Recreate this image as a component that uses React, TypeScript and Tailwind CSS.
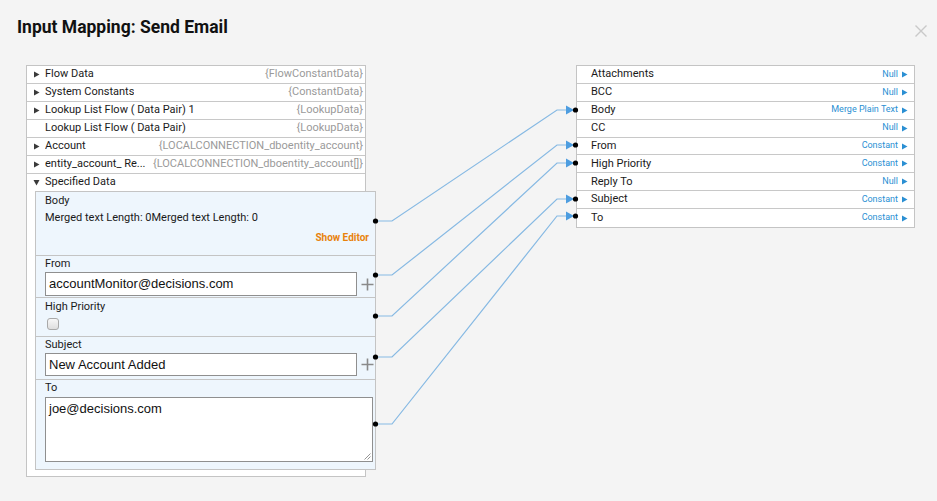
const leftRows = [
  { label: 'Flow Data', value: '{FlowConstantData}', arrow: true },
  { label: 'System Constants', value: '{ConstantData}', arrow: true },
  { label: 'Lookup List Flow ( Data Pair) 1', value: '{LookupData}', arrow: true },
  { label: 'Lookup List Flow ( Data Pair)', value: '{LookupData}', arrow: false },
  { label: 'Account', value: '{LOCALCONNECTION_dboentity_account}', arrow: true },
  { label: 'entity_account_ Re...', value: '{LOCALCONNECTION_dboentity_account[]}', arrow: true },
];

const rightRows = [
  { label: 'Attachments', value: 'Null' },
  { label: 'BCC', value: 'Null' },
  { label: 'Body', value: 'Merge Plain Text' },
  { label: 'CC', value: 'Null' },
  { label: 'From', value: 'Constant' },
  { label: 'High Priority', value: 'Constant' },
  { label: 'Reply To', value: 'Null' },
  { label: 'Subject', value: 'Constant' },
  { label: 'To', value: 'Constant' },
];

// source y (left dots) -> target y (right dots)
const links = [
  [221, 110],
  [275, 145],
  [316, 163],
  [357, 199],
  [424, 216],
];

const PlusIcon = () => (
  <svg width="13" height="13" viewBox="0 0 13 13" className="shrink-0">
    <path d="M6.5 0.5v12M0.5 6.5h12" stroke="#8a8a8a" strokeWidth="1.6" />
  </svg>
);

const Caret = ({ down = false, color = '#3a3a3a' }: { down?: boolean; color?: string }) => (
  <svg width="7" height="7" viewBox="0 0 7 7" className="shrink-0">
    {down ? <polygon points="0.5,1 6.5,1 3.5,6.5" fill={color} /> : <polygon points="1,0.5 6.5,3.5 1,6.5" fill={color} />}
  </svg>
);

const Connectors = () => (
  <svg className="absolute left-0 top-0 pointer-events-none" width="937" height="501">
    {links.map(([sy, ty], i) => (
      <g key={i}>
        <polyline
          points={`375.5,${sy} 392,${sy} 557,${ty} 567,${ty}`}
          fill="none"
          stroke="#86b9e3"
          strokeWidth="1.2"
        />
        <polygon points={`566,${ty - 4.5} 574,${ty} 566,${ty + 4.5}`} fill="#4d9de0" />
        <circle cx="375.5" cy={sy} r="2.6" fill="#000" />
        <circle cx="575.5" cy={ty} r="2.6" fill="#000" />
      </g>
    ))}
  </svg>
);

const App: React.FC = () => {
  return (
    <div
      className="relative w-[937px] h-[501px] bg-[#f4f4f4] overflow-hidden text-[#222]"
      style={{ fontFamily: 'Roboto, "Liberation Sans", sans-serif' }}
    >
      {/* Header */}
      <div className="flex items-center justify-between pl-[17px] pr-[10px] pt-[14px] h-[40px]">
        <h1 className="text-[17.5px] font-bold text-[#111]">Input Mapping: Send Email</h1>
        <svg width="12" height="12" viewBox="0 0 12 12" className="mt-[7px]">
          <path d="M0.5 0.5l11 11M11.5 0.5l-11 11" stroke="#c9c9c9" strokeWidth="1.4" />
        </svg>
      </div>

      <div className="flex items-start justify-between pl-[26px] pr-[22px] pt-[25px]">
        {/* Left: available data */}
        <div className="w-[340px] border border-[#c4c4c4] bg-white pb-[6px]">
          {leftRows.map((row) => (
            <div
              key={row.label}
              className="flex items-center h-[18px] border-b border-[#c8c8c8] pl-[6px] pr-[2px] text-[11px]"
            >
              <span className="w-[12px] flex items-center">{row.arrow ? <Caret /> : null}</span>
              <span className="truncate text-[#1a1a1a]">{row.label}</span>
              <span className="ml-auto pl-[4px] text-[11px] text-[#9a9a9a] whitespace-nowrap">{row.value}</span>
            </div>
          ))}
          <div className="flex items-center h-[17px] pl-[6px] text-[11px]">
            <span className="w-[12px] flex items-center"><Caret down /></span>
            <span className="text-[#1a1a1a]">Specified Data</span>
          </div>

          {/* Specified data panel */}
          <div className="ml-[8px] w-[341px] border border-[#c4c4c4] bg-[#eef6fd] text-[11px] text-[#1a1a1a]">
            <div className="h-[64px] border-b border-[#c4c4c4] pl-[9px] pr-[6px] pt-[2px] flex flex-col">
              <div className="leading-[14px]">Body</div>
              <div className="leading-[14px] mt-[3px]">Merged text Length: 0Merged text Length: 0</div>
              <div className="mt-auto mb-[10px] self-end text-[10px] font-bold text-[#e8820c]">Show Editor</div>
            </div>

            <div className="h-[42px] border-b border-[#c4c4c4] pl-[9px] pt-[1px]">
              <div className="leading-[14px]">From</div>
              <div className="flex items-center gap-[4px] mt-[1px]">
                <div
                  className="w-[312px] h-[24px] border border-[#8f8f8f] bg-white flex items-center px-[3px] text-[13px] text-[#111]"
                  style={{ fontFamily: '"Liberation Sans", Arial, sans-serif' }}
                >
                  accountMonitor@decisions.com
                </div>
                <PlusIcon />
              </div>
            </div>

            <div className="h-[39px] border-b border-[#c4c4c4] pl-[9px] pt-[2px]">
              <div className="leading-[14px]">High Priority</div>
              <div className="mt-[4px] ml-[2px] w-[12px] h-[12px] rounded-[3px] border border-[#a9a9a9] bg-gradient-to-b from-[#f7f7f7] to-[#dedede]"></div>
            </div>

            <div className="h-[43px] border-b border-[#c4c4c4] pl-[9px] pt-[1px]">
              <div className="leading-[14px]">Subject</div>
              <div className="flex items-center gap-[4px] mt-[1px]">
                <div
                  className="w-[312px] h-[23px] border border-[#8f8f8f] bg-white flex items-center px-[3px] text-[13px] text-[#111]"
                  style={{ fontFamily: '"Liberation Sans", Arial, sans-serif' }}
                >
                  New Account Added
                </div>
                <PlusIcon />
              </div>
            </div>

            <div className="h-[89px] pl-[9px] pt-[1px]">
              <div className="leading-[14px]">To</div>
              <div
                className="relative mt-[2px] w-[328px] h-[65px] border border-[#8f8f8f] bg-white px-[3px] pt-[1px] text-[13px] text-[#111]"
                style={{ fontFamily: '"Liberation Sans", Arial, sans-serif' }}
              >
                joe@decisions.com
                <svg width="7" height="7" viewBox="0 0 7 7" className="absolute right-[1px] bottom-[1px]">
                  <path d="M6.5 0.5l-6 6M6.5 3.5l-3 3" stroke="#8a8a8a" strokeWidth="0.9" />
                </svg>
              </div>
            </div>
          </div>
        </div>

        {/* Right: inputs */}
        <div className="w-[339px] border border-[#c4c4c4] bg-white">
          {rightRows.map((row, i) => (
            <div
              key={row.label}
              className={`flex items-center h-[17.9px] pl-[14px] pr-[6px] ${i < rightRows.length - 1 ? 'border-b border-[#c8c8c8]' : ''}`}
            >
              <span className="text-[11px] text-[#1a1a1a]">{row.label}</span>
              <span className="ml-auto flex items-center gap-[3px] text-[9px] text-[#2a8fd3]">
                {row.value}
                <Caret color="#2a8fd3" />
              </span>
            </div>
          ))}
        </div>
      </div>

      <Connectors />
    </div>
  );
};

export default App;
